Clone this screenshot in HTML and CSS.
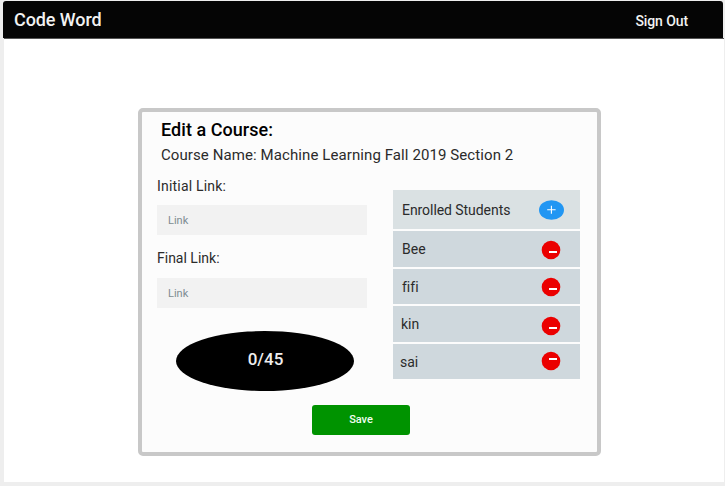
FILE: index.html
```html
<!DOCTYPE html>
<html lang="en">
<head>
<meta charset="utf-8">
<title>Code Word</title>
<link rel="stylesheet" href="styles.css">
</head>
<body>
<header class="topbar">
  <span class="brand">Code Word</span>
  <span class="signout">Sign Out</span>
</header>
<main class="page">
  <section class="card">
    <h1 class="title">Edit a Course:</h1>
    <p class="course">Course Name: Machine Learning Fall 2019 Section 2</p>
    <div class="columns">
      <div class="links">
        <label class="label label-initial">Initial Link:</label>
        <div class="field">Link</div>
        <label class="label label-final">Final Link:</label>
        <div class="field">Link</div>
        <div class="counter"><span>0/45</span></div>
      </div>
      <div class="students">
        <div class="row head"><span class="head-text">Enrolled Students</span>
          <svg class="add" viewBox="0 0 25 20"><ellipse cx="12.5" cy="10" rx="12.5" ry="9.8" fill="#2196f3"/><path d="M8.2 9.7h8.4M12.4 5.7v8" stroke="#fff" stroke-width="1.1"/></svg></div>
        <div class="row bee"><span>Bee</span>
          <svg class="remove" viewBox="0 0 20 20"><circle cx="10" cy="10" r="9.3" fill="#eb0000"/><path d="M8 12h8" stroke="#fff" stroke-width="2"/></svg></div>
        <div class="row fifi"><span>fifi</span>
          <svg class="remove" viewBox="0 0 20 20"><circle cx="10" cy="10" r="9.3" fill="#eb0000"/><path d="M8 12h8" stroke="#fff" stroke-width="2"/></svg></div>
        <div class="row kin"><span>kin</span>
          <svg class="remove" viewBox="0 0 20 20"><circle cx="10" cy="10" r="9.3" fill="#eb0000"/><path d="M8 12h8" stroke="#fff" stroke-width="2"/></svg></div>
        <div class="row sai"><span>sai</span>
          <svg class="remove" viewBox="0 0 20 20"><circle cx="10" cy="10" r="9.3" fill="#eb0000"/><path d="M8 8h8" stroke="#fff" stroke-width="2"/></svg></div>
      </div>
    </div>
    <button class="save">Save</button>
  </section>
</main>
</body>
</html>
```
FILE: styles.css
```css
* { box-sizing: border-box; }
body {
  margin: 0;
  height: 486px;
  padding: 1px 1px 0 3px;
  overflow: hidden;
  background: #eee;
  color: #2b2b2b;
  font-family: Roboto, "Liberation Sans", sans-serif;
}
.topbar {
  width: 720px;
  height: 37px;
  padding: 0 35px 0 11px;
  display: flex;
  justify-content: space-between;
  border-radius: 3px 3px 0 0;
  background: #050505;
  color: #f2f2f2;
  font-weight: 500;
}
.brand { font-size: 18px; line-height: 38px; letter-spacing: -.08px; }
.signout { font-size: 14px; line-height: 40px; letter-spacing: -.1px; }
.page {
  width: 720px;
  height: 443.5px;
  margin-left: 1px;
  padding: 68.5px 0 0 133.5px;
  border-top: 1px solid #555;
  background: #fff;
}
.card {
  width: 463px;
  height: 348px;
  border: 4px solid #c8c8c8;
  border-radius: 5px;
  background: #fcfcfc;
}
.title {
  margin: 6px 0 0 19.5px;
  font-size: 18px;
  line-height: 24px;
  font-weight: 500;
  color: #000;
  letter-spacing: .05px;
}
.course {
  margin: 3px 0 0 19.5px;
  font-size: 15px;
  line-height: 20px;
  letter-spacing: .09px;
  white-space: nowrap;
}
.columns {
  height: 236px;
  padding: 0 16.5px 0 15.5px;
  display: flex;
  justify-content: space-between;
}
.links { width: 210px; padding-top: 11px; }
.label { display: block; font-size: 14px; line-height: 20px; }
.label-initial { letter-spacing: .2px; }
.label-final { margin-top: 13px; }
.field {
  height: 30px;
  margin-top: 9px;
  padding-left: 11px;
  background: #f2f2f2;
  color: #7d8c91;
  font-size: 11px;
  line-height: 31px;
}
.label-final + .field { margin-top: 10px; }
.counter {
  width: 178px;
  height: 60px;
  margin: 23px 0 0 19px;
  border-radius: 50%;
  background: #000;
  color: #eee;
  font-size: 17px;
  font-weight: 500;
  line-height: 56px;
  text-align: center;
  text-indent: 1px;
}
.students { width: 187px; padding-top: 25px; }
.row {
  height: 35.6px;
  margin-bottom: 2px;
  padding: 1px 19px 0 9px;
  display: flex;
  align-items: center;
  justify-content: space-between;
  background: #cfd8dd;
  font-size: 14px;
  font-variant-ligatures: none;
}
.head { height: 39.5px; padding-right: 16.5px; background: #dae1e3; }
.head-text { letter-spacing: -.06px; padding-top: 1px; }
.add { width: 25px; height: 20px; }
.remove { width: 20px; height: 20px; margin-top: 1px; }
.kin { padding-left: 8px; }
.kin .remove { margin-top: 3px; }
.sai { padding-left: 7px; }
.sai .remove { margin-top: -2px; }
.save {
  display: block;
  width: 98px;
  height: 30px;
  margin: 4px 0 0 170.5px;
  padding: 0;
  border: 0;
  border-radius: 3px;
  background: #009300;
  color: #f2fff2;
  font: 500 11px/30px Roboto, "Liberation Sans", sans-serif;
  letter-spacing: -.1px;
}
```
